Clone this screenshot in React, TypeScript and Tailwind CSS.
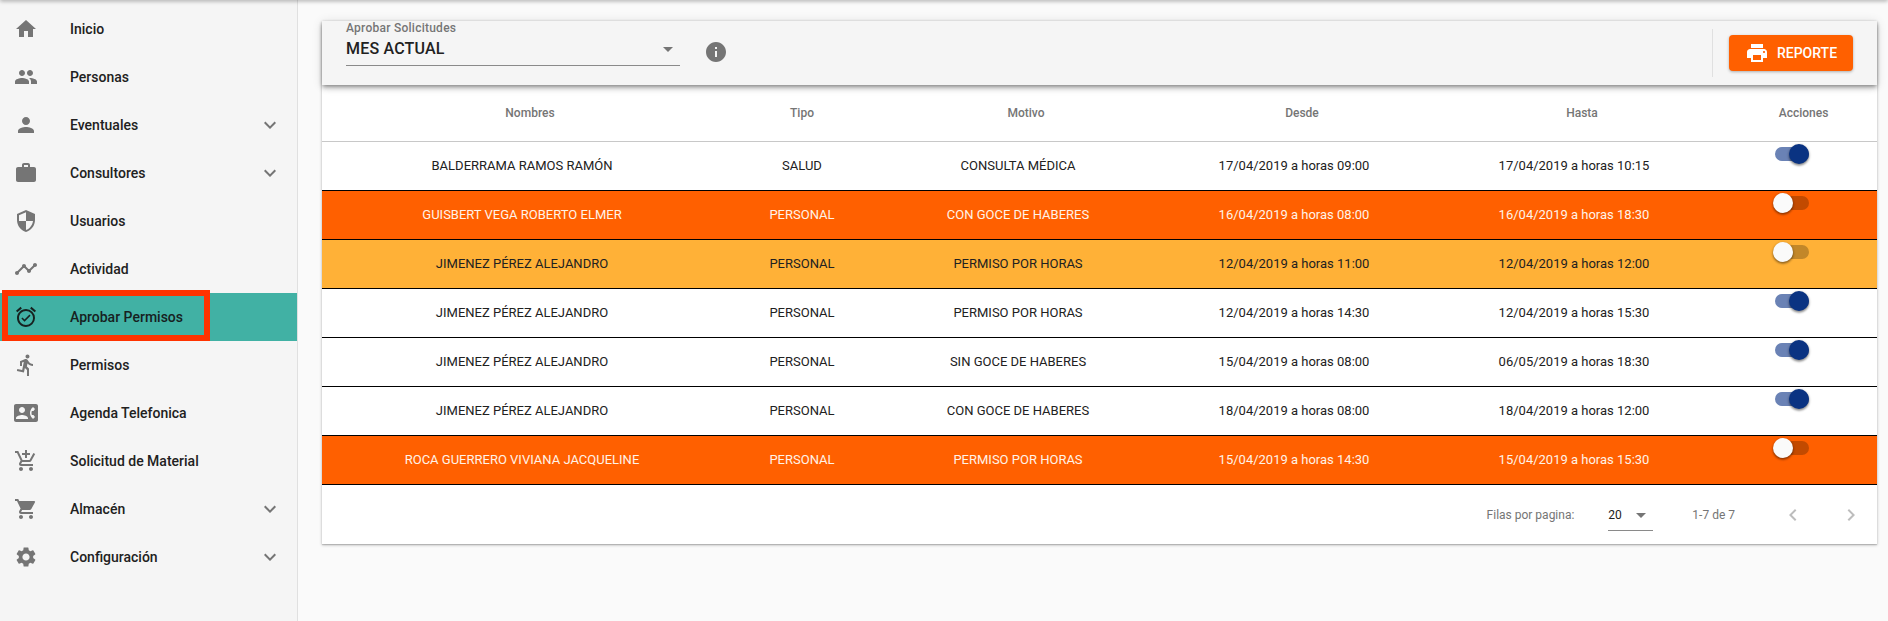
import {
  MdAddShoppingCart,
  MdAlarmOn,
  MdArrowDropDown,
  MdChevronLeft,
  MdChevronRight,
  MdContactPhone,
  MdDirectionsRun,
  MdExpandMore,
  MdHome,
  MdInfo,
  MdPeople,
  MdPerson,
  MdPrint,
  MdSecurity,
  MdSettings,
  MdShoppingCart,
  MdTimeline,
  MdWork,
} from "react-icons/md";

const menu = [
  { label: "Inicio", icon: MdHome },
  { label: "Personas", icon: MdPeople },
  { label: "Eventuales", icon: MdPerson, more: true },
  { label: "Consultores", icon: MdWork, more: true },
  { label: "Usuarios", icon: MdSecurity },
  { label: "Actividad", icon: MdTimeline },
  { label: "Aprobar Permisos", icon: MdAlarmOn, active: true },
  { label: "Permisos", icon: MdDirectionsRun },
  { label: "Agenda Telefonica", icon: MdContactPhone },
  { label: "Solicitud de Material", icon: MdAddShoppingCart },
  { label: "Almacén", icon: MdShoppingCart, more: true },
  { label: "Configuración", icon: MdSettings, more: true },
];

const rows = [
  { name: "BALDERRAMA RAMOS RAMÓN", tipo: "SALUD", motivo: "CONSULTA MÉDICA", desde: "17/04/2019 a horas 09:00", hasta: "17/04/2019 a horas 10:15", on: true, tone: "white" },
  { name: "GUISBERT VEGA ROBERTO ELMER", tipo: "PERSONAL", motivo: "CON GOCE DE HABERES", desde: "16/04/2019 a horas 08:00", hasta: "16/04/2019 a horas 18:30", on: false, tone: "orange" },
  { name: "JIMENEZ PÉREZ ALEJANDRO", tipo: "PERSONAL", motivo: "PERMISO POR HORAS", desde: "12/04/2019 a horas 11:00", hasta: "12/04/2019 a horas 12:00", on: false, tone: "amber" },
  { name: "JIMENEZ PÉREZ ALEJANDRO", tipo: "PERSONAL", motivo: "PERMISO POR HORAS", desde: "12/04/2019 a horas 14:30", hasta: "12/04/2019 a horas 15:30", on: true, tone: "white" },
  { name: "JIMENEZ PÉREZ ALEJANDRO", tipo: "PERSONAL", motivo: "SIN GOCE DE HABERES", desde: "15/04/2019 a horas 08:00", hasta: "06/05/2019 a horas 18:30", on: true, tone: "white" },
  { name: "JIMENEZ PÉREZ ALEJANDRO", tipo: "PERSONAL", motivo: "CON GOCE DE HABERES", desde: "18/04/2019 a horas 08:00", hasta: "18/04/2019 a horas 12:00", on: true, tone: "white" },
  { name: "ROCA GUERRERO VIVIANA JACQUELINE", tipo: "PERSONAL", motivo: "PERMISO POR HORAS", desde: "15/04/2019 a horas 14:30", hasta: "15/04/2019 a horas 15:30", on: false, tone: "orange" },
];

const toneClass: Record<string, string> = {
  white: "bg-white text-[#212121]",
  orange: "bg-[#ff6000] text-[#fff3e8]",
  amber: "bg-[#ffb137] text-[#212121]",
};

const trackClass: Record<string, string> = {
  orange: "bg-[#c24a00]",
  amber: "bg-[#c28729]",
};

const columns = "grid grid-cols-[400px_144px_304px_248px_312px_147px]";

function Toggle({ on, tone }: { on: boolean; tone: string }) {
  return (
    <div className="relative mt-[2px] ml-[43px] h-[20px] w-[36px]">
      <div
        className={`absolute top-[3px] left-[2px] h-[14px] w-[34px] rounded-full ${
          on ? "bg-[#6a82b5]" : trackClass[tone]
        }`}
      />
      <div
        className={`absolute top-0 h-[20px] w-[20px] rounded-full shadow-[0_1px_3px_rgba(0,0,0,0.4),0_2px_2px_rgba(0,0,0,0.2)] ${
          on ? "left-[16px] bg-[#0a3382]" : "left-0 bg-[#fafafa]"
        }`}
      />
    </div>
  );
}

export default function App() {
  return (
    <div className="relative flex min-h-[621px] bg-[#fafafa] font-['Roboto',sans-serif]">
      <div className="absolute top-[-4px] right-0 left-0 h-[4px] shadow-[0_1px_4px_rgba(0,0,0,0.35)]" />

      <aside className="w-[298px] shrink-0 border-r border-[#e0e0e0] bg-[#f5f5f5] pt-[5px]">
        {menu.map((item) => (
          <div
            key={item.label}
            className={`flex h-[48px] items-center pr-[16px] pl-[14px] ${item.active ? "bg-[#41b1a4] text-[#17211f]" : "text-[#212121]"}`}
          >
            <div className="flex w-[24px] justify-center">
              <item.icon size={24} className={item.active ? "text-[#17211f]" : "text-[#757575]"} />
            </div>
            <span className="ml-[32px] flex-1 text-[14px] font-medium">{item.label}</span>
            {item.more && <MdExpandMore size={24} className="mr-[-1px] text-[#757575]" />}
          </div>
        ))}
      </aside>

      <main className="flex-1 pt-[21px] pr-[11px] pl-[24px]">
        <div className="bg-white shadow-[0_1px_3px_rgba(0,0,0,0.25),0_1px_1px_rgba(0,0,0,0.14)]">
          <div className="relative z-10 flex h-[64px] bg-[#f5f5f5] pl-[24px] shadow-[0_2px_4px_-1px_rgba(0,0,0,0.4),0_4px_5px_rgba(0,0,0,0.14),0_1px_10px_rgba(0,0,0,0.12)]">
            <div className="h-[45px] w-[334px] border-b border-[#8a8a8a]">
              <div className="text-[12px] leading-[14px] font-medium tracking-[0.25px] text-[#757575]">Aprobar Solicitudes</div>
              <div className="flex items-start justify-between">
                <span className="mt-[4px] text-[16px] leading-[19px] font-medium tracking-[0.2px] text-[#212121]">MES ACTUAL</span>
                <MdArrowDropDown size={24} className="mt-[2px] text-[#757575]" />
              </div>
            </div>
            <MdInfo size={24} className="mt-[19px] ml-[24px] text-[#757575]" />
            <div className="mt-[8px] mr-[24px] ml-auto flex h-[48px] items-center border-l border-[#e0e0e0] pl-[16px]">
              <button className="flex h-[36px] w-[124px] items-center justify-center rounded-[4px] bg-[#ff6000] text-[14px] font-medium text-white shadow-[0_1px_3px_rgba(0,0,0,0.3)]">
                <MdPrint size={24} className="mr-[8px]" />
                REPORTE
              </button>
            </div>
          </div>

          <div className={`${columns} h-[57px] items-center border-b border-[#c8c8c8] text-[12px] font-medium text-[#757575]`}>
            <div className="pl-[16px] text-center">Nombres</div>
            <div className="pl-[16px] text-center">Tipo</div>
            <div className="pl-[16px] text-center">Motivo</div>
            <div className="pl-[16px] text-center">Desde</div>
            <div className="pl-[16px] text-center">Hasta</div>
            <div className="text-center">Acciones</div>
          </div>

          {rows.map((row, i) => (
            <div key={i} className={`${columns} h-[49px] border-b border-black text-[13px] ${toneClass[row.tone]}`}>
              <div className="flex items-center justify-center">{row.name}</div>
              <div className="flex items-center justify-center pl-[16px]">{row.tipo}</div>
              <div className="flex items-center justify-center">{row.motivo}</div>
              <div className="flex items-center justify-center">{row.desde}</div>
              <div className="flex items-center justify-center">{row.hasta}</div>
              <Toggle on={row.on} tone={row.tone} />
            </div>
          ))}

          <div className="flex h-[59px] items-center justify-end pr-[14px] text-[12px] text-[#757575]">
            <span>Filas por pagina:</span>
            <div className="ml-[34px] flex h-[32px] w-[45px] items-center justify-between border-b border-[#8a8a8a] pt-[2px]">
              <span className="text-[#212121]">20</span>
              <MdArrowDropDown size={24} className="text-[#757575]" />
            </div>
            <span className="ml-[39px]">1-7 de 7</span>
            <MdChevronLeft size={24} className="ml-[46px] text-[#bdbdbd]" />
            <MdChevronRight size={24} className="ml-[34px] text-[#bdbdbd]" />
          </div>
        </div>
      </main>

      <div className="pointer-events-none absolute top-[290px] left-[2px] h-[51px] w-[208px] border-[6px] border-[#ff3300]" />
    </div>
  );
}
